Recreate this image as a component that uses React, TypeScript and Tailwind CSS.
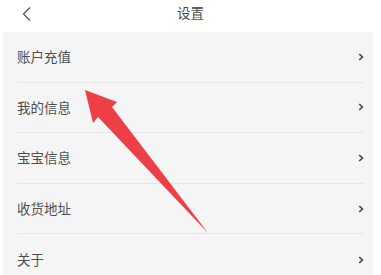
import React from "react";

const items = ["账户充值", "我的信息", "宝宝信息", "收货地址", "关于"];

function Chevron() {
  return (
    <svg width="6" height="8" viewBox="0 0 6 8" className="shrink-0">
      <path d="M1.2 1 L4.4 4 L1.2 7" fill="none" stroke="#4a4a4a" strokeWidth="1.7" />
    </svg>
  );
}

export default function App() {
  return (
    <div
      className="relative w-[381px] h-[275px] overflow-hidden bg-white"
      style={{ fontFamily: '"Noto Sans CJK SC", "Noto Sans", sans-serif' }}
    >
      <div className="relative h-[32px] flex items-center justify-center">
        <svg width="12" height="16" viewBox="0 0 12 16" className="absolute left-[21px] top-[6px]">
          <path d="M9 1.5 L2.5 8 L9 14.5" fill="none" stroke="#555" strokeWidth="1.3" />
        </svg>
        <span className="text-[13.5px] text-[#4a4a4a] leading-none -mt-[6px]">设置</span>
      </div>
      <div className="ml-[3px] w-[370px] bg-[#f5f5f5]">
        {items.map((t, i) => (
          <div key={t} className="pl-[14px] pr-[9px]">
            <div
              className={`h-[50.6px] flex items-center justify-between ${
                i < items.length - 1 ? "border-b border-[#e6e6e6]" : ""
              }`}
            >
              <span className="text-[13.5px] text-[#4f4f4f] leading-none">{t}</span>
              <Chevron />
            </div>
          </div>
        ))}
      </div>
      <svg
        width="381"
        height="275"
        viewBox="0 0 381 275"
        className="absolute left-0 top-0 pointer-events-none"
      >
        <polygon
          points="85,90 117,102 112,107 208,233 98,117 93,123"
          fill="#ee3f47"
        />
      </svg>
    </div>
  );
}
